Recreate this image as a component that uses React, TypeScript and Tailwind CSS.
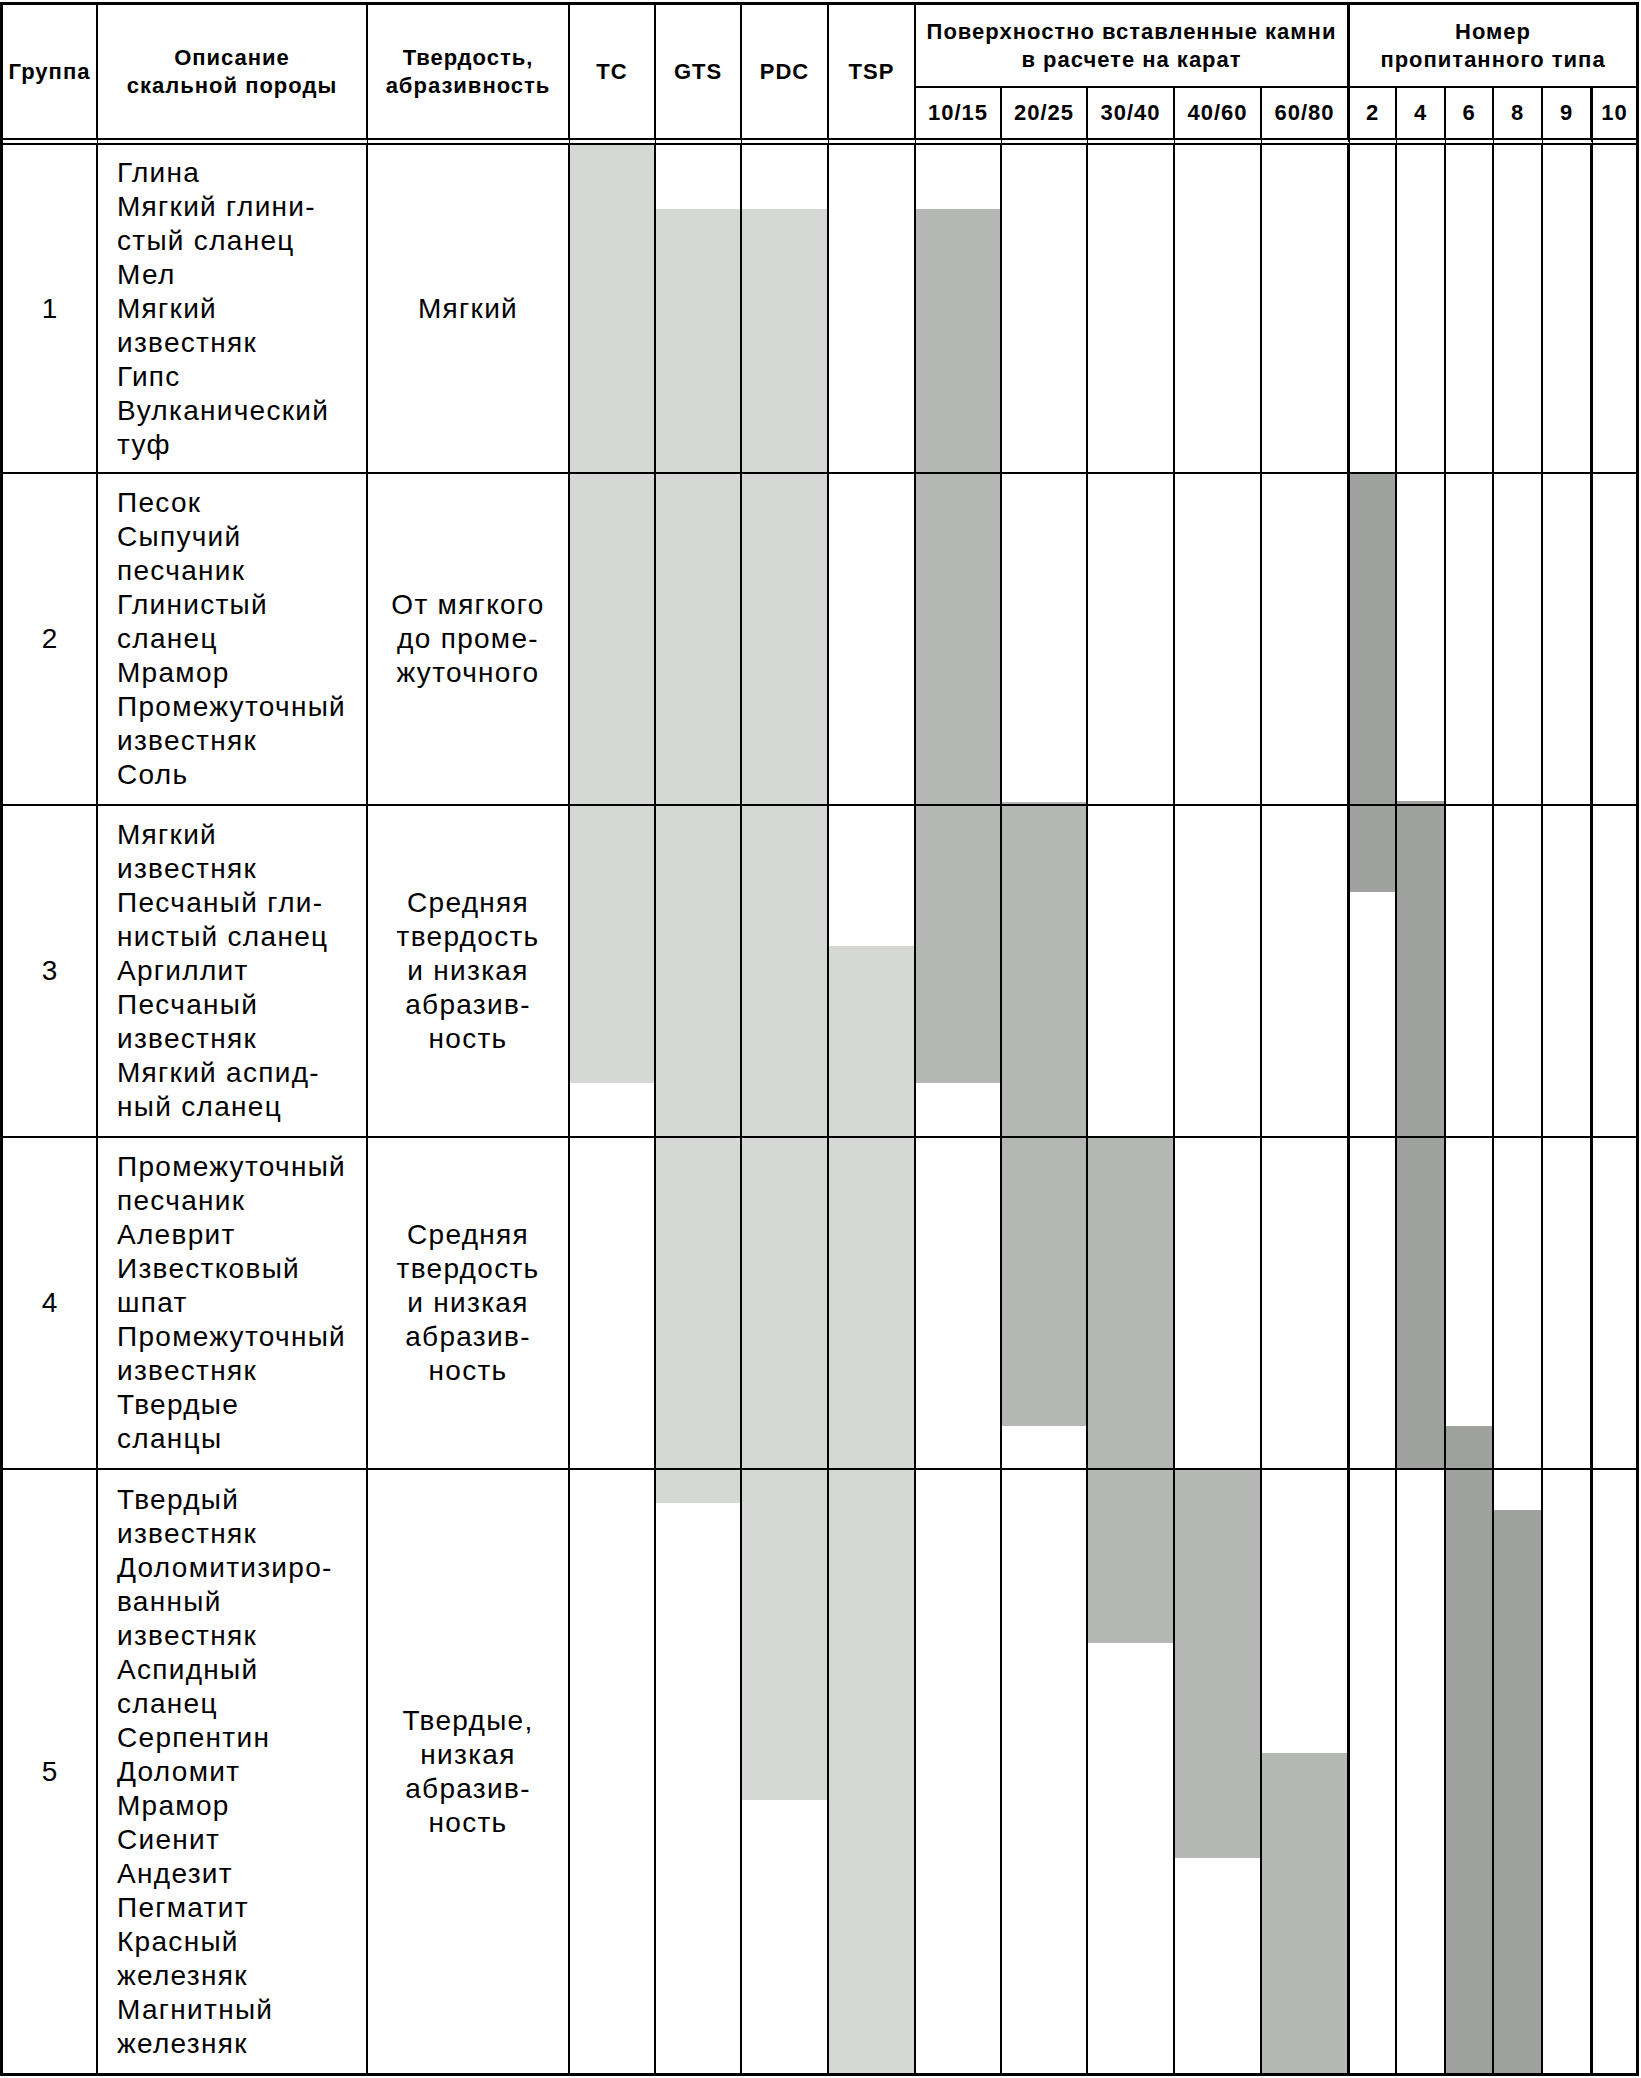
const LIGHT = "bg-[#d6d8d5]"
const MID = "bg-[#b5b7b4]"
const DARK = "bg-[#9fa19e]"

// page y of each body row's content box, and its height (border not included)
const rowTops = [145, 474, 806, 1138, 1470]
const rowHeights = [327, 330, 330, 330, 603]

// shaded ranges per column index, in page y
const bars: Record<number, [number, number, string]> = {
  3: [145, 1083, LIGHT],
  4: [209, 1503, LIGHT],
  5: [209, 1800, LIGHT],
  6: [946, 2073, LIGHT],
  7: [209, 1083, MID],
  8: [802, 1426, MID],
  9: [1137, 1643, MID],
  10: [1469, 1858, MID],
  11: [1753, 2073, MID],
  12: [473, 892, DARK],
  13: [801, 1469, DARK],
  14: [1426, 2073, DARK],
  15: [1510, 2073, DARK],
}

const rows = [
  {
    group: "1",
    rocks: ["Глина", "Мягкий глини-", "стый сланец", "Мел", "Мягкий", "известняк", "Гипс", "Вулканический", "туф"],
    hardness: ["Мягкий"],
  },
  {
    group: "2",
    rocks: ["Песок", "Сыпучий", "песчаник", "Глинистый", "сланец", "Мрамор", "Промежуточный", "известняк", "Соль"],
    hardness: ["От мягкого", "до проме-", "жуточного"],
  },
  {
    group: "3",
    rocks: ["Мягкий", "известняк", "Песчаный гли-", "нистый сланец", "Аргиллит", "Песчаный", "известняк", "Мягкий аспид-", "ный сланец"],
    hardness: ["Средняя", "твердость", "и низкая", "абразив-", "ность"],
  },
  {
    group: "4",
    rocks: ["Промежуточный", "песчаник", "Алеврит", "Известковый", "шпат", "Промежуточный", "известняк", "Твердые", "сланцы"],
    hardness: ["Средняя", "твердость", "и низкая", "абразив-", "ность"],
  },
  {
    group: "5",
    rocks: [
      "Твердый", "известняк", "Доломитизиро-", "ванный", "известняк", "Аспидный", "сланец", "Серпентин",
      "Доломит", "Мрамор", "Сиенит", "Андезит", "Пегматит", "Красный", "железняк", "Магнитный", "железняк",
    ],
    hardness: ["Твердые,", "низкая", "абразив-", "ность"],
  },
]

const subHeads = ["10/15", "20/25", "30/40", "40/60", "60/80", "2", "4", "6", "8", "9", "10"]

const rightBorder = (c: number) => (c === 17 ? "" : c === 11 || c === 16 ? "border-r-[3px]" : "border-r-2")

const headText = "font-bold text-[22px] leading-[28px] tracking-[1px] text-center"
const dbl = "border-b-[7px] [border-bottom-style:double]"

const Fill = ({ col, row }: { col: number; row: number }) => {
  const bar = bars[col]
  if (!bar) return null
  const top = rowTops[row]
  const bottom = top + rowHeights[row]
  const a = Math.max(bar[0], top)
  const b = Math.min(bar[1], bottom)
  if (b <= a) return null
  return <div className={`w-full shrink-0 ${bar[2]}`} style={{ marginTop: a - top, height: b - a }} />
}

export default function App() {
  return (
    <div className="min-h-screen bg-white text-black font-['Liberation_Sans',Arial,sans-serif]">
      <div className="mt-[2px] grid w-[1639px] grid-cols-[95px_270px_202px_86px_86px_87px_87px_86px_86px_87px_87px_88px_47px_49px_48px_49px_50px_43px] grid-rows-[83px_57px_329px_332px_332px_332px_603px] border-[3px] border-black">
        {/* header */}
        <div className={`row-span-2 flex items-center justify-center border-black border-r-2 ${dbl} ${headText}`}>Группа</div>
        <div className={`row-span-2 flex items-center justify-center border-black border-r-2 ${dbl} ${headText}`}>
          Описание
          <br />
          скальной породы
        </div>
        <div className={`row-span-2 flex items-center justify-center border-black border-r-2 ${dbl} ${headText}`}>
          Твердость,
          <br />
          абразивность
        </div>
        {["TC", "GTS", "PDC", "TSP"].map((t) => (
          <div key={t} className={`row-span-2 flex items-center justify-center border-black border-r-2 ${dbl} ${headText}`}>
            {t}
          </div>
        ))}
        <div className={`col-span-5 flex items-center justify-center border-black border-r-[3px] border-b-2 ${headText}`}>
          Поверхностно вставленные камни
          <br />
          в расчете на карат
        </div>
        <div className={`col-span-6 flex items-center justify-center border-black border-b-2 ${headText}`}>
          Номер
          <br />
          пропитанного типа
        </div>
        {subHeads.map((t, i) => (
          <div key={t} className={`flex items-center justify-center border-black ${rightBorder(i + 7)} ${dbl} ${headText}`}>
            {t}
          </div>
        ))}

        {/* body */}
        {rows.map((r, ri) => {
          const bb = ri === rows.length - 1 ? "" : "border-b-2"
          return [
            <div key={`g${ri}`} className={`flex items-center justify-center border-black border-r-2 ${bb} text-[28px] leading-[34px]`}>
              {r.group}
            </div>,
            <div key={`d${ri}`} className={`flex flex-col justify-center border-black border-r-2 ${bb} pl-[19px] text-[28px] leading-[34px] tracking-[1.3px]`}>
              {r.rocks.map((l, i) => (
                <span key={i} className="whitespace-nowrap">
                  {l}
                </span>
              ))}
            </div>,
            <div key={`h${ri}`} className={`flex flex-col items-center justify-center border-black border-r-2 ${bb} text-center text-[28px] leading-[34px] tracking-[1.3px]`}>
              {r.hardness.map((l, i) => (
                <span key={i} className="whitespace-nowrap">
                  {l}
                </span>
              ))}
            </div>,
            ...Array.from({ length: 15 }, (_, k) => {
              const c = k + 3
              return (
                <div key={`c${ri}-${c}`} className={`flex flex-col border-black ${rightBorder(c)} ${bb}`}>
                  <Fill col={c} row={ri} />
                </div>
              )
            }),
          ]
        })}
      </div>
    </div>
  )
}
